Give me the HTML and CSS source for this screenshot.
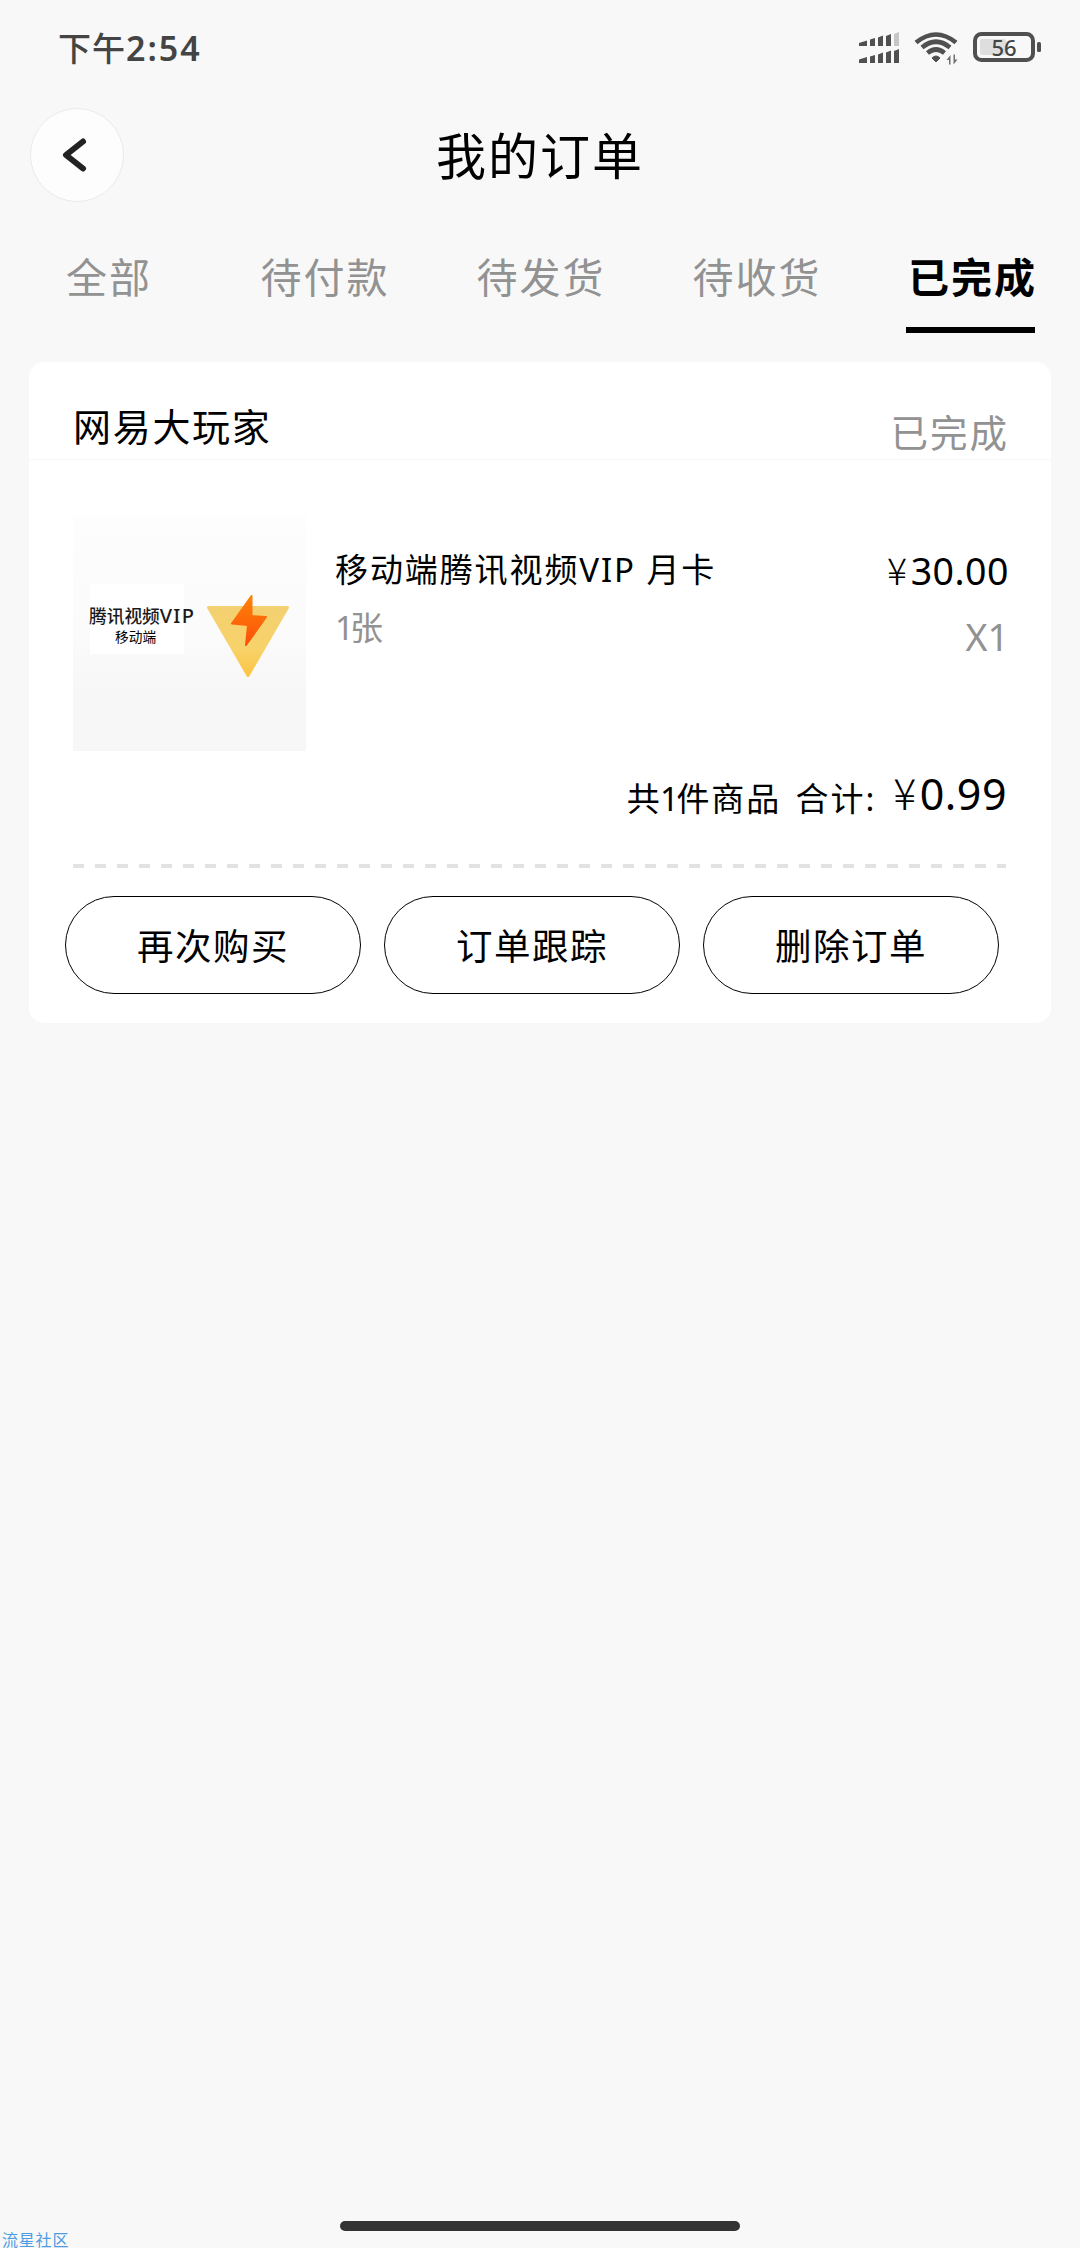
FILE: index.html
```html
<!DOCTYPE html>
<html lang="zh-CN">
<head>
<meta charset="utf-8">
<title>我的订单</title>
<link rel="stylesheet" href="styles.css">
</head>
<body>
<div class="screen">
  <header class="status">
    <span class="time">下午<span class="clock">2:54</span></span>
    <svg class="status-icons" width="190" height="36" viewBox="855 29 190 36">
      <g fill="#505050">
        <path d="M859 43l8-2.500v5.500h-8zM870 39.500l5-1.500v8h-5zM878 37.500l5-2v10.500h-5zM886 36l5-2v12h-5z"/>
        <path d="M894 34l5-2v14h-5z" fill="#c6c6c6"/>
        <path d="M859 59.500l8-2.500v6h-8zM870 56.500l5-1.500v8h-5zM878 54.500l5-2v10.500h-5zM886 52.500l5-2v12.500h-5zM894 51l5-2v14h-5z"/>
        <path d="M932 58q4-4 8 0l-4 4z" stroke="#505050" stroke-linejoin="round"/>
        <path d="M950.500 55l-4 5h2.500v4.500h1.500zM953.500 64.500l4-5h-2.500v-5h-1.500z" fill="#707070"/>
      </g>
      <g fill="none" stroke="#505050" stroke-width="4.600">
        <path d="M916 42.500Q936 26.500 956 42.500M922 47.500Q936 36 950 47.500M927.500 53Q936 46 944.500 53"/>
      </g>
      <rect x="980" y="39" width="26" height="16" rx="2" fill="#dedede"/>
      <rect x="975" y="34" width="58" height="26" rx="6.500" fill="none" stroke="#505050" stroke-width="4"/>
      <rect x="1037" y="42" width="4" height="10" rx="1.500" fill="#505050"/>
      <text class="battery-level" x="1004" y="55.500" text-anchor="middle">56</text>
    </svg>
  </header>

  <div class="titlebar">
    <button class="back" aria-label="返回">
      <svg width="30" height="40" viewBox="0 0 30 40"><path d="M23 6.500L6 20l17 13.500" fill="none" stroke="#222" stroke-width="6" stroke-linecap="round" stroke-linejoin="round"/></svg>
    </button>
    <h1 class="title">我的订单</h1>
  </div>

  <nav class="tabs">
    <a class="tab">全部</a>
    <a class="tab">待付款</a>
    <a class="tab">待发货</a>
    <a class="tab">待收货</a>
    <a class="tab tab-active">已完成</a>
  </nav>

  <main class="card">
    <div class="card-head">
      <span class="shop">网易大玩家</span>
      <span class="state">已完成</span>
    </div>
    <div class="product">
      <div class="thumb">
        <div class="thumb-label">
          <div class="thumb-name">腾讯视频<span class="thumb-vip">VIP</span></div>
          <div class="thumb-sub">移动端</div>
        </div>
        <svg class="thumb-logo" width="86" height="86" viewBox="205 592 86 86">
          <defs>
            <linearGradient id="gold" x1="0" y1="0" x2="0" y2="1"><stop offset="0" stop-color="#f3d070"/><stop offset=".6" stop-color="#f8d26a"/><stop offset="1" stop-color="#fcc545"/></linearGradient>
            <linearGradient id="flame" x1="0" y1="0" x2="0" y2="1"><stop offset="0" stop-color="#ff8208"/><stop offset="1" stop-color="#fc5009"/></linearGradient>
          </defs>
          <path d="M208.500 606.500h79L248 674.500z" fill="url(#gold)" stroke="url(#gold)" stroke-width="3" stroke-linejoin="round"/>
          <path d="M251.500 595l-19.500 27.500 16 1.500-2 20 20-28-14.500-1z" fill="url(#flame)" stroke="url(#flame)" stroke-width="2" stroke-linejoin="round"/>
        </svg>
      </div>
      <div class="info">
        <div class="name">移动端腾讯视频<span class="vip">VIP</span> 月卡</div>
        <div class="spec"><span class="one">1</span>张</div>
      </div>
      <div class="cost">
        <div class="price"><span class="yen">¥</span>30.00</div>
        <div class="count">X1</div>
      </div>
    </div>
    <div class="total">
      <span class="total-text">共<span class="one">1</span>件商品 合计:</span>
      <span class="total-price"><span class="yen">¥</span>0.99</span>
    </div>
    <div class="dashes"></div>
    <div class="actions">
      <button class="action">再次购买</button>
      <button class="action">订单跟踪</button>
      <button class="action">删除订单</button>
    </div>
  </main>

  <footer class="bottom">
    <span class="community">流星社区</span>
    <span class="home-bar"></span>
  </footer>
</div>
</body>
</html>
```
FILE: styles.css
```css
* { box-sizing: border-box; }

body {
  margin: 0;
  background: #f8f8f8;
  color: #000;
  font-family: "Noto Sans", "Noto Sans CJK SC", sans-serif;
}

button {
  margin: 0;
  padding: 0;
  font: inherit;
  color: inherit;
}

.screen {
  display: flex;
  flex-direction: column;
  width: 1080px;
  height: 2248px;
  overflow: hidden;
}

/* status bar */
.status {
  display: flex;
  justify-content: space-between;
  align-items: center;
  height: 94px;
  padding: 0 35px 0 58px;
}

.time {
  font-family: "Noto Sans CJK SC", sans-serif;
  font-size: 33px;
  font-weight: 500;
  line-height: 40px;
  letter-spacing: 1px;
  color: #444;
}

.clock {
  font-family: "Noto Sans", sans-serif;
  font-size: 34px;
  font-weight: 600;
  letter-spacing: 2px;
}

.battery-level {
  font-family: "Noto Sans", sans-serif;
  font-size: 22px;
  font-weight: 500;
  fill: #444;
}

/* title */
.titlebar {
  display: grid;
  grid-template-columns: 94px 1fr 94px;
  align-items: center;
  height: 122px;
  padding: 0 30px;
}

.back {
  display: flex;
  align-items: center;
  justify-content: center;
  width: 94px;
  height: 94px;
  padding-right: 5px;
  border: 1.500px solid #eaeaea;
  border-radius: 50%;
  background: #fdfdfd;
}

.title {
  margin: 0;
  padding-top: 2px;
  font-size: 50px;
  font-weight: 400;
  line-height: 60px;
  letter-spacing: 2px;
  text-align: center;
}

/* tabs */
.tabs {
  display: grid;
  grid-template-columns: repeat(5, 216px);
  justify-items: center;
  height: 146px;
  padding-top: 33px;
}

.tab {
  height: 84px;
  padding-left: 2px;
  font-size: 41px;
  line-height: 57px;
  letter-spacing: 2px;
  white-space: nowrap;
  color: #929292;
}

.tab-active {
  width: 129px;
  margin-right: 3px;
  border-bottom: 6px solid #000;
  font-weight: 700;
  color: #000;
}

/* order card */
.card {
  display: flex;
  flex-direction: column;
  width: 1022px;
  height: 661px;
  margin-left: 29px;
  border-radius: 15px;
  background: #fff;
}

.card-head {
  display: flex;
  justify-content: space-between;
  height: 98px;
  padding: 37px 42px 0 44px;
  border-bottom: 1px solid #f7f7f7;
}

.shop {
  font-size: 38px;
  line-height: 54px;
  letter-spacing: 1.700px;
}

.state {
  padding-top: 7px;
  font-size: 37.500px;
  line-height: 54px;
  letter-spacing: 2px;
  color: #929292;
}

.product {
  display: flex;
  height: 292px;
  padding: 56px 42px 0 44px;
}

.thumb {
  display: flex;
  align-items: center;
  width: 233px;
  height: 235px;
  padding-left: 16px;
  background: linear-gradient(#fdfdfd, #fbfbfb 50%, #f7f7f7 75%);
}

.thumb-label {
  display: flex;
  flex-direction: column;
  width: 116px;
  height: 70px;
  margin-top: -30px;
  padding-top: 20px;
  background: linear-gradient(#fff, #fff) 1px 0 / 94px 70px no-repeat;
}

.thumb-name {
  font-size: 17.700px;
  font-weight: 500;
  line-height: 24px;
  color: #1a1a1a;
  white-space: nowrap;
}

.thumb-vip {
  font-size: 20px;
  letter-spacing: 1.300px;
}

.thumb-sub {
  padding-left: 26px;
  font-size: 13.700px;
  line-height: 18px;
}

.thumb-logo { margin-top: 4px; }

.info {
  flex: 1;
  padding: 29px 0 0 29px;
}

.name {
  font-size: 33px;
  line-height: 50px;
  letter-spacing: 1.900px;
  white-space: nowrap;
}

.spec {
  padding-top: 8px;
  font-size: 33px;
  line-height: 50px;
  color: #929292;
}

.one { letter-spacing: -4px; }

.total-text .one { letter-spacing: -2.500px; margin-left: -1.500px; }

.cost {
  padding-top: 28px;
  text-align: right;
}

.price {
  font-size: 37.500px;
  line-height: 50px;
  letter-spacing: .5px;
}

.yen {
  margin-right: 3px;
  font-family: "Noto Sans CJK SC", sans-serif;
  font-weight: 300;
}

.count {
  padding-top: 16px;
  font-size: 37.500px;
  line-height: 50px;
  color: #929292;
}

.total {
  display: flex;
  justify-content: flex-end;
  height: 112px;
  padding: 14px 44px 0 0;
}

.total-text {
  padding-top: 8px;
  font-size: 33px;
  line-height: 50px;
  letter-spacing: 1.900px;
  word-spacing: 4px;
}

.total-price {
  margin-left: 17px;
  font-size: 43px;
  line-height: 50px;
  letter-spacing: .5px;
}

.dashes {
  height: 4px;
  margin: 0 45px 0 44px;
  background: repeating-linear-gradient(90deg, #e2e2e2 0 11px, transparent 11px 22px);
}

.actions {
  display: flex;
  gap: 23px;
  padding: 28px 0 0 36px;
}

.action {
  width: 296px;
  height: 98px;
  padding-bottom: 2px;
  border: 1px solid #000;
  border-radius: 49px;
  background: #fff;
  font-size: 36.500px;
  letter-spacing: 1.500px;
}

/* bottom edge */
.bottom {
  display: grid;
  grid-template-columns: 340px 400px 340px;
  align-items: start;
  margin-top: auto;
  height: 27px;
}

.community {
  padding: 11px 0 0 2px;
  font-size: 16px;
  line-height: 16px;
  letter-spacing: .8px;
  color: #4d9ce2;
}

.home-bar {
  height: 10px;
  border-radius: 5px;
  background: #333;
}
```
